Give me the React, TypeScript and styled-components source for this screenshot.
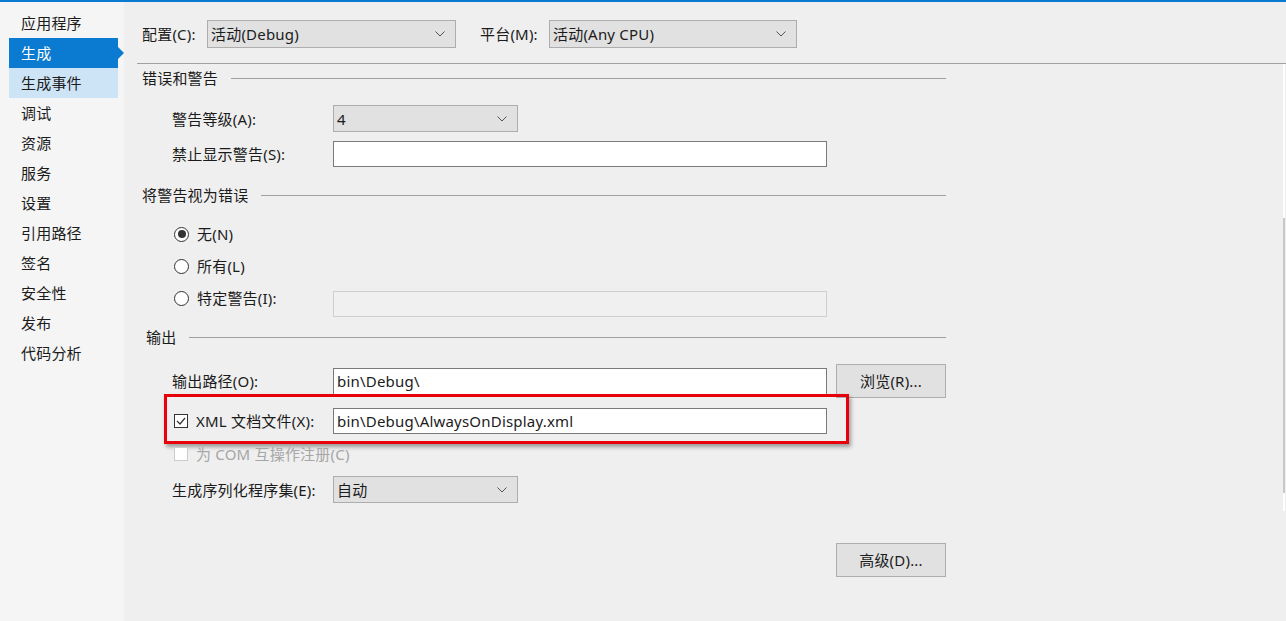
import React from "react";
import styled, { createGlobalStyle, css } from "styled-components";

const Global = createGlobalStyle`
  html, body { margin: 0; padding: 0; }
  body {
    width: 1286px; height: 621px; overflow: hidden;
    font-family: "Noto Sans", "Noto Sans CJK SC", sans-serif;
    font-size: 15px; color: #1b1b1b; line-height: 20px; letter-spacing: 0.2px;
    background: #efefef;
  }
  * { box-sizing: border-box; }
`;

const Frame = styled.div`
  display: flex; flex-direction: column; width: 1286px; height: 621px;
`;
const TopBar = styled.div`
  height: 2px; background: #0a7bd0; flex: none;
`;
const Columns = styled.div`
  display: flex; flex: 1; min-height: 0;
`;
const Sidebar = styled.nav`
  width: 124px; flex: none; background: #f5f5f5;
  display: flex; flex-direction: column; padding-top: 6px;
`;
const NavItem = styled.div<{ $state?: "selected" | "hover" }>`
  position: relative; height: 30px; margin-left: 9px; width: 109px;
  padding-left: 12px; display: flex; align-items: center;
  ${(p) => p.$state === "selected" && css`
    background: #0a7bd0; color: #fff;
    &::after {
      content: ""; position: absolute; right: -6px; top: 9px;
      border-top: 6px solid transparent; border-bottom: 6px solid transparent;
      border-left: 6px solid #0a7bd0;
    }
  `}
  ${(p) => p.$state === "hover" && css`background: #cde3f6;`}
`;

const Main = styled.main`
  flex: 1; display: flex; flex-direction: column; background: #efefef; min-width: 0;
`;
const ConfigBar = styled.div`
  display: flex; align-items: center; padding: 18px 0 0 18px; height: 46px;
`;
const ConfigLabel = styled.span<{ $w: number; $ml?: number }>`
  width: ${(p) => p.$w}px; margin-left: ${(p) => p.$ml ?? 0}px; flex: none; white-space: nowrap;
`;
const TopRule = styled.div`
  height: 1px; background: #a0a0a0; margin: 15px 0 0 13px;
`;
const Body = styled.div`
  flex: 1; display: flex;
`;
const Content = styled.div`
  flex: 1; display: flex; flex-direction: column; padding-left: 18px;
`;
const Column = styled.div`
  width: 804px; display: flex; flex-direction: column;
`;
const Header = styled.div<{ $mt: number; $indent?: number }>`
  display: flex; align-items: center; height: 20px; margin-top: ${(p) => p.$mt}px;
  padding-left: ${(p) => p.$indent ?? 0}px; white-space: nowrap;
  &::after { content: ""; flex: 1; height: 1px; background: #a0a0a0; margin-left: 13px; }
`;
const Row = styled.div<{ $mt: number; $h: number; $align?: string }>`
  position: relative; display: flex; align-items: ${(p) => p.$align ?? "center"};
  height: ${(p) => p.$h}px; margin-top: ${(p) => p.$mt}px; padding-left: 30px;
`;
const Label = styled.span<{ $disabled?: boolean; $top?: number }>`
  width: 161px; flex: none; white-space: nowrap; display: flex; align-items: center;
  color: ${(p) => (p.$disabled ? "#a6a6a6" : "inherit")};
  margin-top: ${(p) => p.$top ?? 0}px; height: 20px;
`;
const Combo = styled.div<{ $w: number; $h?: number }>`
  width: ${(p) => p.$w}px; height: ${(p) => p.$h ?? 27}px; flex: none;
  background: #e1e1e1; border: 1px solid #adadad;
  display: flex; align-items: center; justify-content: space-between;
  padding: 0 10px 0 3px; white-space: nowrap;
`;
const TextBox = styled.div<{ $disabled?: boolean; $top?: number; $h?: number }>`
  width: 494px; height: ${(p) => p.$h ?? 27}px; flex: none;
  background: ${(p) => (p.$disabled ? "#f0f0f0" : "#fff")};
  border: 1px solid ${(p) => (p.$disabled ? "#cfcfcf" : "#7a7a7a")};
  margin-top: ${(p) => p.$top ?? 0}px;
  display: flex; align-items: center; padding-left: 3px; white-space: nowrap;
`;
const Button = styled.div`
  width: 110px; height: 34px; flex: none; background: #e1e1e1; border: 1px solid #adadad;
  display: flex; align-items: center; justify-content: center; white-space: nowrap;
`;
const Radio = styled.span<{ $checked?: boolean }>`
  width: 15px; height: 15px; border-radius: 50%; border: 1px solid #333; background: #fff;
  margin: 0 8px 0 2px; flex: none; display: flex; align-items: center; justify-content: center;
  &::after {
    content: ""; width: 8px; height: 8px; border-radius: 50%;
    background: ${(p) => (p.$checked ? "#333" : "transparent")};
  }
`;
const Check = styled.span<{ $disabled?: boolean }>`
  width: 14px; height: 14px; border: 1px solid ${(p) => (p.$disabled ? "#cccccc" : "#333")};
  background: #fff; margin: 0 8px 0 2px; flex: none; display: flex; align-items: center; justify-content: center;
`;
const Highlight = styled.div`
  position: absolute; left: 22px; top: -14px; width: 685px; height: 50px;
  border: 3px solid #e8000b; box-shadow: 2px 3px 4px rgba(0,0,0,0.35);
  pointer-events: none;
`;
const Spacer = styled.span<{ $w: number }>` width: ${(p) => p.$w}px; flex: none; `;
const RightRow = styled.div<{ $mt: number }>`
  display: flex; justify-content: flex-end; margin-top: ${(p) => p.$mt}px;
`;
const Scroll = styled.div`
  width: 2px; height: 447px; margin-right: 1px; background: #fff; flex: none;
  display: flex; flex-direction: column;
`;
const Thumb = styled.div`
  margin-top: 154px; height: 275px; background: #c8c8c8;
`;

const Chevron = () => (
  <svg width="10" height="6" viewBox="0 0 10 6">
    <polyline points="0.5,0.5 5,5 9.5,0.5" fill="none" stroke="#555" strokeWidth="1" />
  </svg>
);
const Tick = () => (
  <svg width="12" height="12" viewBox="0 0 12 12">
    <polyline points="2,6 5,9 10,3" fill="none" stroke="#333" strokeWidth="1.2" />
  </svg>
);

const navItems = ["应用程序", "生成", "生成事件", "调试", "资源", "服务", "设置", "引用路径", "签名", "安全性", "发布", "代码分析"];

export default function App() {
  return (
    <>
      <Global />
      <Frame>
        <TopBar />
        <Columns>
          <Sidebar>
            {navItems.map((n) => (
              <NavItem key={n} $state={n === "生成" ? "selected" : n === "生成事件" ? "hover" : undefined}>
                {n}
              </NavItem>
            ))}
          </Sidebar>
          <Main>
            <ConfigBar>
              <ConfigLabel $w={65}>配置(C):</ConfigLabel>
              <Combo $w={249} $h={28}>活动(Debug)<Chevron /></Combo>
              <ConfigLabel $w={69} $ml={24}>平台(M):</ConfigLabel>
              <Combo $w={248} $h={28}>活动(Any CPU)<Chevron /></Combo>
            </ConfigBar>
            <TopRule />
            <Body>
              <Content>
                <Column>
                  <Header $mt={4}>错误和警告</Header>
                  <Row $mt={17} $h={27}>
                    <Label>警告等级(A):</Label>
                    <Combo $w={185}>4<Chevron /></Combo>
                  </Row>
                  <Row $mt={9} $h={26}>
                    <Label>禁止显示警告(S):</Label>
                    <TextBox $h={26} />
                  </Row>
                  <Header $mt={18}>将警告视为错误</Header>
                  <Row $mt={19} $h={20}>
                    <Label><Radio $checked />无(N)</Label>
                  </Row>
                  <Row $mt={12} $h={20}>
                    <Label><Radio />所有(L)</Label>
                  </Row>
                  <Row $mt={12} $h={29} $align="flex-start">
                    <Label><Radio />特定警告(I):</Label>
                    <TextBox $disabled $top={3} $h={26} />
                  </Row>
                  <Header $mt={10} $indent={4}>输出</Header>
                  <Row $mt={17} $h={34}>
                    <Label>输出路径(O):</Label>
                    <TextBox>bin\Debug\</TextBox>
                    <Spacer $w={9} />
                    <Button>浏览(R)...</Button>
                  </Row>
                  <Row $mt={10} $h={26}>
                    <Label><Check><Tick /></Check>XML 文档文件(X):</Label>
                    <TextBox $h={26}>bin\Debug\AlwaysOnDisplay.xml</TextBox>
                    <Highlight />
                  </Row>
                  <Row $mt={10} $h={20}>
                    <Label $disabled><Check $disabled />为 COM 互操作注册(C)</Label>
                  </Row>
                  <Row $mt={12} $h={27}>
                    <Label>生成序列化程序集(E):</Label>
                    <Combo $w={185}>自动<Chevron /></Combo>
                  </Row>
                  <RightRow $mt={40}>
                    <Button>高级(D)...</Button>
                  </RightRow>
                </Column>
              </Content>
              <Scroll><Thumb /></Scroll>
            </Body>
          </Main>
        </Columns>
      </Frame>
    </>
  );
}
